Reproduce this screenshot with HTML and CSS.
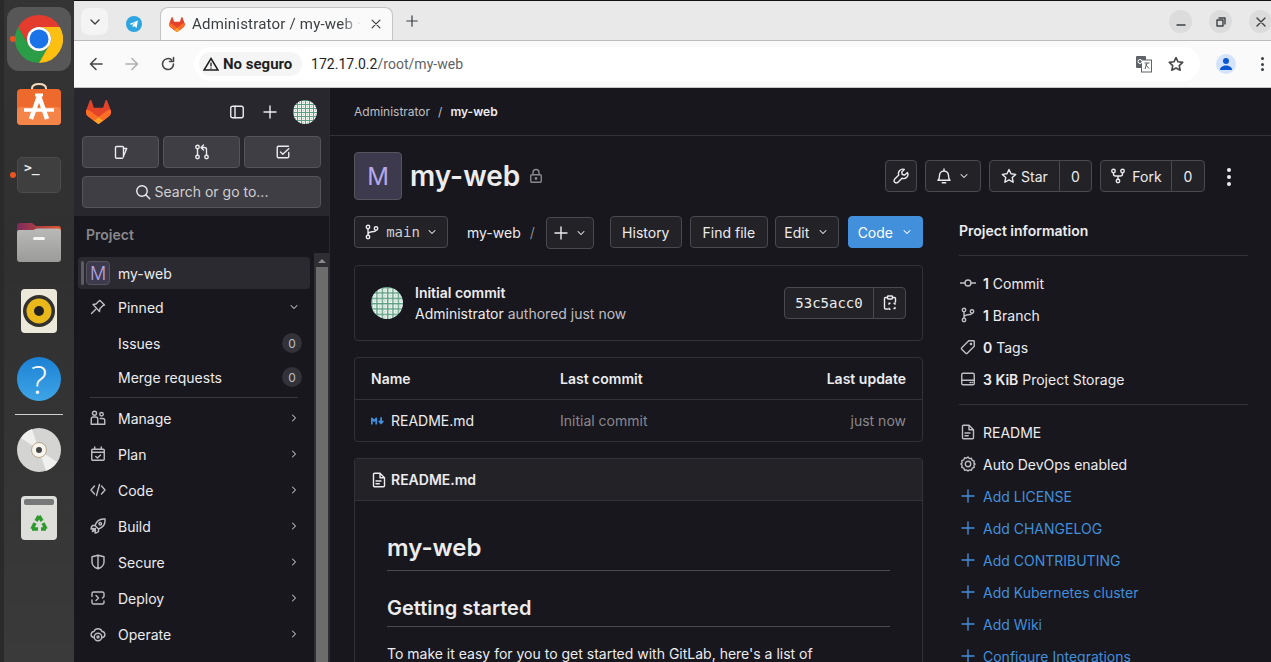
FILE: index.html
```html
<!DOCTYPE html>
<html lang="es">
<head>
  <meta charset="UTF-8">
  <meta name="viewport" content="width=device-width, initial-scale=1.0">
  <title>Administrator / my-web</title>
  <link rel="stylesheet" href="styles.css">
</head>
<body>
  <svg class="sprite" aria-hidden="true">
    <defs>
      <pattern id="identicon" width="4" height="4" patternUnits="userSpaceOnUse">
        <rect width="4" height="4" fill="#eef5f1"/>
        <rect width="4" height="1" fill="#5e9f83"/>
        <rect width="1" height="4" fill="#5e9f83"/>
        <rect x="2" y="2" width="1" height="1" fill="#a9d0bd"/>
      </pattern>
      <symbol id="tanuki" viewBox="0 0 25 24">
        <path d="m24.507 9.5-.034-.09L21.082.562a.896.896 0 0 0-1.694.091l-2.29 7.01H7.825L5.535.653a.898.898 0 0 0-1.694-.09L.451 9.411.416 9.5a6.297 6.297 0 0 0 2.09 7.278l.012.01.03.022 5.16 3.867 2.56 1.935 1.554 1.176a1.051 1.051 0 0 0 1.268 0l1.555-1.176 2.56-1.935 5.197-3.89.014-.01A6.297 6.297 0 0 0 24.507 9.5Z" fill="#E24329"/>
        <path d="m24.507 9.5-.034-.09a11.44 11.44 0 0 0-4.56 2.051l-7.447 5.632 4.742 3.584 5.197-3.89.014-.01A6.297 6.297 0 0 0 24.507 9.5Z" fill="#FC6D26"/>
        <path d="m7.707 20.677 2.56 1.935 1.555 1.176a1.051 1.051 0 0 0 1.268 0l1.555-1.176 2.56-1.935-4.743-3.584-4.755 3.584Z" fill="#FCA326"/>
        <path d="M5.01 11.461a11.43 11.43 0 0 0-4.56-2.05L.416 9.5a6.297 6.297 0 0 0 2.09 7.278l.012.01.03.022 5.16 3.867 4.745-3.584-7.444-5.632Z" fill="#FC6D26"/>
      </symbol>
      <symbol id="avatar" viewBox="0 0 24 24"><circle cx="12" cy="12" r="12" fill="url(#identicon)"/></symbol>
      <symbol id="chev-d" viewBox="0 0 16 16"><path d="M4 6l4 4 4-4"/></symbol>
      <symbol id="chev-r" viewBox="0 0 16 16"><path d="M6 4l4 4-4 4"/></symbol>
      <symbol id="plus" viewBox="0 0 16 16"><path d="M8 2v12M2 8h12"/></symbol>
      <symbol id="tab-x" viewBox="0 0 16 16"><path d="M3.500 3.500l9 9M12.500 3.500l-9 9"/></symbol>
      <symbol id="panel" viewBox="0 0 16 16"><rect x="1.750" y="2.250" width="12.500" height="11.500" rx="2"/><path d="M6 2.250v11.500"/></symbol>
      <symbol id="issue-new" viewBox="0 0 16 16"><path d="M10.500 13V3.500a1 1 0 0 0-1-1H3.500a1 1 0 0 0-1 1v9.750a1 1 0 0 0 1 1h6"/><path d="M10.500 4.500h3.250L11 11"/></symbol>
      <symbol id="mr" viewBox="0 0 16 16"><circle cx="3.500" cy="3" r="1.750"/><circle cx="3.500" cy="13" r="1.750"/><circle cx="12.500" cy="13" r="1.750"/><path d="M3.500 4.750v6.500M12.500 11.250V5.500a2 2 0 0 0-2-2H7.500M9.500 1L7 3.500 9.500 6"/></symbol>
      <symbol id="todo" viewBox="0 0 16 16"><path d="M13.750 8.500v4a1.250 1.250 0 0 1-1.250 1.250h-9A1.250 1.250 0 0 1 2.250 12.500v-9A1.250 1.250 0 0 1 3.500 2.250h10"/><path d="M5.500 8l2.250 2.250 6-5.500"/></symbol>
      <symbol id="search" viewBox="0 0 16 16"><circle cx="7" cy="7" r="5.250"/><path d="M11 11l3.750 3.750"/></symbol>
      <symbol id="pin" viewBox="0 0 16 16"><path d="M10 1.500l4.500 4.500-1.500.5-3 3-.5 3L3 5.500l3-.5 3-3zM5.500 10.500L1.500 14.500"/></symbol>
      <symbol id="users" viewBox="0 0 16 16"><circle cx="4.500" cy="3.250" r="2"/><circle cx="11.500" cy="4.250" r="1.750"/><path d="M1.250 14.250V9a2 2 0 0 1 2-2h2.500a2 2 0 0 1 2 2v5.250zM7.750 14.250h7V10.500a2 2 0 0 0-2-2h-2.500"/></symbol>
      <symbol id="calendar" viewBox="0 0 16 16"><rect x="1.750" y="3.250" width="12.500" height="11" rx="1"/><path d="M1.750 6.250h12.500M4.750 1v2.250M11.250 1v2.250M5.750 10.500l1.750 1.500 3-3"/></symbol>
      <symbol id="code" viewBox="0 0 16 16"><path d="M4.500 4L1 8l3.500 4M11.500 4L15 8l-3.500 4M9.500 2.500l-3 11"/></symbol>
      <symbol id="rocket" viewBox="0 0 16 16"><path d="M15 1c-5-.5-8.500 2-10 6.500l3.500 3.500C13 9.500 15.500 6 15 1zM5 7.500H2.500A6 6 0 0 0 1 11l2.500-.5M8.500 11v2.500A6 6 0 0 1 5 15l.5-2.500M5.500 10.500c-1.500 0-2.500 1-3 3 2-.5 3-1.500 3-3z"/><circle cx="10.250" cy="5.750" r="1.250"/></symbol>
      <symbol id="shield" viewBox="0 0 16 16"><path d="M8 1.250l6 1.500V8c0 3.500-3 5.750-6 6.750C5 13.750 2 11.500 2 8V2.750zM8 1.250v13.500"/></symbol>
      <symbol id="deploy" viewBox="0 0 16 16"><path d="M2 6.500V3.500a1.500 1.500 0 0 1 1.500-1.500H12.500a1.500 1.500 0 0 1 1.500 1.500v3l-1.500 1.500M2 10v2.500A1.500 1.500 0 0 0 3.500 14h9a1.500 1.500 0 0 0 1.500-1.500V11M6 5.500L8.500 8 6 10.500"/></symbol>
      <symbol id="operate" viewBox="0 0 16 16"><path d="M3.500 11.500A3 3 0 0 1 1.250 8 3 3 0 0 1 4 5.500 4.250 4.250 0 0 1 12 5.500 3 3 0 0 1 14.750 8a3 3 0 0 1-2.250 3.500"/><circle cx="8" cy="11" r="3.750"/><circle cx="8" cy="11" r="1"/></symbol>
      <symbol id="lock" viewBox="0 0 16 16"><rect x="2.750" y="6.750" width="10.500" height="7.500" rx="1"/><path d="M5 6.750V4.500a3 3 0 0 1 6 0v2.250"/><circle cx="8" cy="10.500" r=".75"/></symbol>
      <symbol id="wrench" viewBox="0 0 16 16"><path d="M14.500 4.500l-2.750 2.500-2.500-.5-.5-2.500L11.250 1.500A4.250 4.250 0 0 0 5.750 7L1.750 11a2.250 2.250 0 0 0 3.250 3.250l4-4A4.250 4.250 0 0 0 14.500 4.500z"/></symbol>
      <symbol id="bell" viewBox="0 0 16 16"><path d="M2 12.250h12c-1.250-1-1.500-2.500-1.500-4.750a4.500 4.500 0 0 0-9 0c0 2.250-.25 3.750-1.500 4.750zM6.250 14.750h3.500M8 1v2"/></symbol>
      <symbol id="star" viewBox="0 0 16 16"><path d="M8 1.500l2 4.300 4.700.6-3.450 3.200.9 4.650L8 11.950 3.850 14.250l.9-4.650L1.300 6.400 6 5.800z"/></symbol>
      <symbol id="fork" viewBox="0 0 16 16"><circle cx="3.500" cy="3" r="1.750"/><circle cx="12.500" cy="3" r="1.750"/><circle cx="8" cy="13" r="1.750"/><path d="M3.500 4.750V6a2 2 0 0 0 2 2h5a2 2 0 0 0 2-2V4.750M8 8v3.250"/></symbol>
      <symbol id="branch" viewBox="0 0 16 16"><circle cx="4" cy="3" r="1.750"/><circle cx="4" cy="13" r="1.750"/><circle cx="12" cy="4.500" r="1.750"/><path d="M4 4.750v6.500M4 10.500c0-2 1.500-2.500 4-2.750 2.500-.25 4-.75 4-1.500"/></symbol>
      <symbol id="clip" viewBox="0 0 16 16"><path d="M5.500 2.500H3.500a1 1 0 0 0-1 1v9.500a1 1 0 0 0 1 1h2M10.500 2.500h2a1 1 0 0 1 1 1V7"/><rect x="5.500" y="1" width="5" height="3" rx=".75"/><path d="M8 8.250H7v1M12 8.250h1v1M13 12.500v1h-1M8 14.250H7v-1"/></symbol>
      <symbol id="doc" viewBox="0 0 16 16"><path d="M9 1.250H3.500a1 1 0 0 0-1 1v11.500a1 1 0 0 0 1 1h9a1 1 0 0 0 1-1V5.750zM9 1.250v4.500h4.500M5 9h5M5 11.750h3.250"/></symbol>
      <symbol id="commit" viewBox="0 0 16 16"><circle cx="8" cy="8" r="3"/><path d="M0 8h5M11 8h5"/></symbol>
      <symbol id="tag" viewBox="0 0 16 16"><path d="M14.250 2.500a.75.750 0 0 0-.75-.75H8.750L1.750 8.750a1 1 0 0 0 0 1.500l4 4a1 1 0 0 0 1.500 0l7-7z"/><circle cx="11" cy="5" r=".6"/></symbol>
      <symbol id="disk" viewBox="0 0 16 16"><rect x="1.750" y="2.250" width="12.500" height="11.500" rx="1.250"/><path d="M1.750 9.250h12.500M10 11.500h.5M12 11.500h.5"/></symbol>
      <symbol id="gear" viewBox="0 0 16 16"><path d="M8 .9l1.300 1.700 2.100-.3.800 2 2 .8-.3 2.100L15.100 8l-1.200 1.300.3 2.100-2 .8-.8 2-2.100-.3L8 15.100l-1.300-1.200-2.100.3-.8-2-2-.8.3-2.100L.9 8l1.200-1.300-.3-2.100 2-.8.8-2 2.100.3z"/><circle cx="8" cy="8" r="2.750"/></symbol>
      <symbol id="markdown" viewBox="0 0 16 10"><path d="M1 8V2l2.500 3L6 2v6M11.500 1.500v6M9.500 5.500l2 2.250 2-2.250"/></symbol>
      <linearGradient id="folder-back" x1="0" x2="1" y1="0" y2="0"><stop offset="0" stop-color="#7d2a5c"/><stop offset="1" stop-color="#e0572a"/></linearGradient>
      <linearGradient id="folder-front" x1="0" x2="0" y1="0" y2="1"><stop offset="0" stop-color="#b9b9b7"/><stop offset="1" stop-color="#9b9b99"/></linearGradient>
    </defs>
  </svg>

  <aside class="dock">
    <div class="dock-item dock-active">
      <span class="dock-dot"></span>
      <svg width="48" height="48" viewBox="0 0 48 48">
        <path d="M24 0A24 24 0 0 1 44.800 12H24A12 12 0 0 0 13.600 30L3.200 12A24 24 0 0 1 24 0z" fill="#e33b2e"/>
        <path d="M3.200 12L13.600 30A12 12 0 0 0 34.400 30L24 48A24 24 0 0 1 3.200 12z" fill="#2a9d46"/>
        <path d="M44.800 12H24A12 12 0 0 1 34.400 30L24 48A24 24 0 0 0 44.800 12z" fill="#fdc010"/>
        <circle cx="24" cy="24" r="12" fill="#fff"/>
        <circle cx="24" cy="24" r="9.500" fill="#1a73e8"/>
      </svg>
    </div>
    <div class="dock-item dock-store">
      <svg width="44" height="44" viewBox="0 0 44 44">
        <path d="M15 7V5.500C15 2.500 18 1 22 1s7 1.500 7 4.500V7" fill="none" stroke="#f7dcbc" stroke-width="2"/>
        <rect y="6" width="44" height="36" rx="4" fill="#ee6a2c"/>
        <rect y="24" width="44" height="18" rx="4" fill="#f58449"/>
        <path d="M22 13L14 36M22 13l8 23" stroke="#fff" stroke-width="4.500" fill="none"/>
        <path d="M18 12h8" stroke="#fff" stroke-width="3"/>
        <path d="M7 27h30" stroke="#fff" stroke-width="3.500"/>
      </svg>
    </div>
    <div class="dock-item dock-term">
      <span class="dock-dot"></span>
      <span class="term-box">&gt;_</span>
    </div>
    <div class="dock-item dock-files">
      <svg width="44" height="42" viewBox="0 0 44 42">
        <path d="M0 4a3 3 0 0 1 3-3h12l4 3h22a3 3 0 0 1 3 3v14H0z" fill="url(#folder-back)"/>
        <path d="M0 10a2 2 0 0 1 2-2h14l4-1.500h21a3 3 0 0 1 3 3V37a3 3 0 0 1-3 3H3a3 3 0 0 1-3-3z" fill="url(#folder-front)"/>
        <rect x="16" y="15" width="12" height="3" rx="1.500" fill="#f5f5f5"/>
      </svg>
    </div>
    <div class="dock-item dock-rhythm">
      <svg width="36" height="44" viewBox="0 0 36 44">
        <rect width="36" height="44" rx="4" fill="#ece8da"/>
        <circle cx="18" cy="22" r="16" fill="#33312e"/>
        <circle cx="18" cy="22" r="12.500" fill="#e9b91c"/>
        <circle cx="18" cy="22" r="5" fill="#222"/>
      </svg>
    </div>
    <div class="dock-item dock-help">?</div>
    <div class="dock-sep"></div>
    <div class="dock-item dock-dvd">
      <svg width="44" height="44" viewBox="0 0 44 44">
        <circle cx="22" cy="22" r="22" fill="#d4d4d2"/>
        <path d="M22 22L4 10A22 22 0 0 1 15 1zM22 22L40 34A22 22 0 0 1 29 43z" fill="#f0f0ee"/>
        <circle cx="22" cy="22" r="7.500" fill="#f7f5ee" stroke="#b9a98a"/>
        <circle cx="22" cy="22" r="3" fill="#444"/>
      </svg>
    </div>
    <div class="dock-item dock-trash">
      <svg width="36" height="44" viewBox="0 0 36 44">
        <rect width="36" height="44" rx="4" fill="#dededb"/>
        <rect x="3" y="3" width="30" height="6" rx="2" fill="#77787a"/>
        <path d="M18 20l-3 5M18 20l3 5M11 33l3-6M11 33h6M25 33l-3-6M25 33h-5" stroke="#2e9a2e" stroke-width="3.500" fill="none"/>
      </svg>
    </div>
  </aside>

  <div class="window">
    <header class="chrome">
      <div class="tabstrip">
        <span class="tab-search"><svg class="ic ic-dark" width="16" height="16"><use href="#chev-d"/></svg></span>
        <span class="tab-pin">
          <svg width="16" height="16" viewBox="0 0 16 16"><circle cx="8" cy="8" r="8" fill="#2ca5e0"/><path d="M3.500 8L12 4.500 10.500 12 8 10l-1.200 1.500L6.500 9l3.500-3L5.500 8.800z" fill="#fff"/></svg>
        </span>
        <div class="tab-active">
          <svg width="16" height="15"><use href="#tanuki"/></svg>
          <span class="tab-title">Administrator / my-web · GitLab</span>
          <svg class="ic ic-dark" width="14" height="14"><use href="#tab-x"/></svg>
        </div>
        <svg class="ic ic-dark tab-new" width="14" height="14"><use href="#plus"/></svg>
        <div class="win-controls">
          <span class="win-btn"><svg class="ic ic-dark" width="12" height="12" viewBox="0 0 12 12"><path d="M2 9h8"/></svg></span>
          <span class="win-btn"><svg class="ic ic-dark" width="12" height="12" viewBox="0 0 12 12"><rect x="2" y="4" width="6" height="6"/><path d="M4 2h6v6"/></svg></span>
          <span class="win-btn"><svg class="ic ic-dark" width="12" height="12" viewBox="0 0 12 12"><path d="M2 2l8 8M10 2l-8 8"/></svg></span>
        </div>
      </div>
      <div class="toolbar">
        <svg class="ic ic-nav" width="16" height="16" viewBox="0 0 16 16"><path d="M14 8H2.500M8 2.500L2.500 8 8 13.500"/></svg>
        <svg class="ic ic-nav ic-off" width="16" height="16" viewBox="0 0 16 16"><path d="M2 8h11.500M8 2.500L13.500 8 8 13.500"/></svg>
        <svg class="ic ic-nav" width="16" height="16" viewBox="0 0 16 16"><path d="M13.500 8A5.500 5.500 0 1 1 11.500 3.800M13.500 1.500v4h-4"/></svg>
        <div class="omnibox">
          <span class="chip">
            <svg width="16" height="14" viewBox="0 0 16 14"><path d="M8 1.500L15 13H1z" fill="none" stroke="#1f1f1f" stroke-width="1.500"/><path d="M8 5.500v4M8 10.500v1.300" stroke="#1f1f1f" stroke-width="1.300"/></svg>
            No seguro
          </span>
          <span class="url"><b>172.17.0.2</b>/root/my-web</span>
          <svg class="omni-translate" width="18" height="18" viewBox="0 0 18 18">
            <rect x="1" y="1" width="10" height="12" rx="1" fill="#5f6368"/>
            <rect x="6.500" y="5" width="10" height="12" fill="#fff" stroke="#5f6368"/>
            <path d="M9.500 8h5M12 8l-2 6M10.500 9.500l3.500 4" stroke="#5f6368" fill="none"/>
            <circle cx="5" cy="6.500" r="2" fill="none" stroke="#fff"/>
          </svg>
          <svg class="ic ic-nav" width="16" height="16"><use href="#star"/></svg>
        </div>
        <span class="profile">
          <svg width="14" height="14" viewBox="0 0 14 14"><circle cx="7" cy="4" r="3" fill="#0b57d0"/><path d="M1 13c0-3 3-4.500 6-4.500s6 1.500 6 4.500z" fill="#0b57d0"/></svg>
        </span>
        <span class="kebab kebab-dark"><i></i><i></i><i></i></span>
      </div>
    </header>

    <div class="gitlab">
      <nav class="sidebar">
        <div class="side-top">
          <div class="side-brand">
            <svg class="logo" width="25" height="24"><use href="#tanuki"/></svg>
            <svg class="ic ic-light brand-panel" width="16" height="16"><use href="#panel"/></svg>
            <svg class="ic ic-light brand-plus" width="16" height="16"><use href="#plus"/></svg>
            <svg class="brand-avatar" width="24" height="24"><use href="#avatar"/></svg>
          </div>
          <div class="side-btns">
            <span class="side-btn"><svg class="ic ic-light" width="16" height="16"><use href="#issue-new"/></svg></span>
            <span class="side-btn"><svg class="ic ic-light" width="16" height="16"><use href="#mr"/></svg></span>
            <span class="side-btn"><svg class="ic ic-light" width="16" height="16"><use href="#todo"/></svg></span>
          </div>
          <div class="side-search"><svg class="ic ic-light" width="16" height="16"><use href="#search"/></svg>Search or go to...</div>
        </div>
        <div class="side-bottom">
          <div class="side-label">Project</div>
          <div class="side-scroll">
            <div class="side-menu">
              <a class="nav-item nav-current"><span class="nav-avatar">M</span>my-web</a>
              <a class="nav-item"><svg class="ic ic-mid" width="16" height="16"><use href="#pin"/></svg>Pinned<svg class="ic ic-mid nav-chev" width="12" height="12"><use href="#chev-d"/></svg></a>
              <a class="nav-item nav-sub">Issues<span class="nav-badge">0</span></a>
              <a class="nav-item nav-sub nav-sub2">Merge requests<span class="nav-badge">0</span></a>
              <div class="nav-sep"></div>
              <a class="nav-item"><svg class="ic ic-mid" width="16" height="16"><use href="#users"/></svg>Manage<svg class="ic ic-mid nav-chev" width="12" height="12"><use href="#chev-r"/></svg></a>
              <a class="nav-item"><svg class="ic ic-mid" width="16" height="16"><use href="#calendar"/></svg>Plan<svg class="ic ic-mid nav-chev" width="12" height="12"><use href="#chev-r"/></svg></a>
              <a class="nav-item"><svg class="ic ic-mid" width="16" height="16"><use href="#code"/></svg>Code<svg class="ic ic-mid nav-chev" width="12" height="12"><use href="#chev-r"/></svg></a>
              <a class="nav-item"><svg class="ic ic-mid" width="16" height="16"><use href="#rocket"/></svg>Build<svg class="ic ic-mid nav-chev" width="12" height="12"><use href="#chev-r"/></svg></a>
              <a class="nav-item"><svg class="ic ic-mid" width="16" height="16"><use href="#shield"/></svg>Secure<svg class="ic ic-mid nav-chev" width="12" height="12"><use href="#chev-r"/></svg></a>
              <a class="nav-item"><svg class="ic ic-mid" width="16" height="16"><use href="#deploy"/></svg>Deploy<svg class="ic ic-mid nav-chev" width="12" height="12"><use href="#chev-r"/></svg></a>
              <a class="nav-item"><svg class="ic ic-mid" width="16" height="16"><use href="#operate"/></svg>Operate<svg class="ic ic-mid nav-chev" width="12" height="12"><use href="#chev-r"/></svg></a>
            </div>
            <div class="scrollbar"><span class="scroll-up"></span><span class="scroll-thumb"></span></div>
          </div>
        </div>
      </nav>

      <main class="main">
        <div class="crumbs"><span>Administrator</span><span class="crumb-sep">/</span><strong>my-web</strong></div>
        <div class="content">
          <div class="center">
            <div class="proj-head">
              <span class="proj-avatar">M</span>
              <h1 class="proj-title">my-web</h1>
              <svg class="ic proj-lock" width="16" height="16"><use href="#lock"/></svg>
              <div class="proj-actions">
                <span class="btn btn-sq"><svg class="ic ic-light" width="16" height="16"><use href="#wrench"/></svg></span>
                <span class="btn btn-bell"><svg class="ic ic-light" width="16" height="16"><use href="#bell"/></svg><svg class="ic ic-light" width="12" height="12"><use href="#chev-d"/></svg></span>
                <span class="btn-group">
                  <span class="btn btn-star"><svg class="ic ic-light" width="16" height="16"><use href="#star"/></svg>Star</span><span class="btn btn-count">0</span>
                </span>
                <span class="btn-group">
                  <span class="btn btn-fork"><svg class="ic ic-light" width="16" height="16"><use href="#fork"/></svg>Fork</span><span class="btn btn-count btn-count-f">0</span>
                </span>
              </div>
            </div>

            <div class="repo-bar">
              <span class="btn btn-branch"><svg class="ic ic-light" width="16" height="16"><use href="#branch"/></svg><code>main</code><svg class="ic ic-light" width="12" height="12"><use href="#chev-d"/></svg></span>
              <span class="repo-path">my-web</span>
              <span class="repo-slash">/</span>
              <span class="btn btn-add"><svg class="ic ic-light" width="16" height="16"><use href="#plus"/></svg><svg class="ic ic-light" width="12" height="12"><use href="#chev-d"/></svg></span>
              <span class="btn btn-history">History</span>
              <span class="btn btn-find">Find file</span>
              <span class="btn btn-edit">Edit<svg class="ic ic-light" width="12" height="12"><use href="#chev-d"/></svg></span>
              <span class="btn btn-code">Code<svg class="ic ic-white" width="12" height="12"><use href="#chev-d"/></svg></span>
            </div>

            <div class="commit-box">
              <svg width="32" height="32"><use href="#avatar"/></svg>
              <div class="commit-text">
                <strong>Initial commit</strong>
                <div><span class="commit-author">Administrator</span> authored just now</div>
              </div>
              <div class="sha">
                <code>53c5acc0</code>
                <span class="sha-copy"><svg class="ic ic-light" width="16" height="16"><use href="#clip"/></svg></span>
              </div>
            </div>

            <table class="files">
              <thead>
                <tr><th>Name</th><th>Last commit</th><th class="right">Last update</th></tr>
              </thead>
              <tbody>
                <tr>
                  <td class="file-name"><svg class="ic ic-blue" width="14" height="10"><use href="#markdown"/></svg>README.md</td>
                  <td class="muted">Initial commit</td>
                  <td class="muted right">just now</td>
                </tr>
              </tbody>
            </table>

            <section class="readme">
              <div class="readme-head"><svg class="ic ic-light" width="16" height="16"><use href="#doc"/></svg>README.md</div>
              <div class="readme-body">
                <h2>my-web</h2>
                <h3>Getting started</h3>
                <p>To make it easy for you to get started with GitLab, here's a list of recommended next steps.</p>
              </div>
            </section>
          </div>

          <aside class="info">
            <h4>Project information</h4>
            <ul class="info-list info-stats">
              <li><svg class="ic ic-mid" width="16" height="16"><use href="#commit"/></svg><span><b>1</b> Commit</span></li>
              <li><svg class="ic ic-mid" width="16" height="16"><use href="#branch"/></svg><span><b>1</b> Branch</span></li>
              <li><svg class="ic ic-mid" width="16" height="16"><use href="#tag"/></svg><span><b>0</b> Tags</span></li>
              <li><svg class="ic ic-mid" width="16" height="16"><use href="#disk"/></svg><span><b>3 KiB</b> Project Storage</span></li>
            </ul>
            <ul class="info-list">
              <li><svg class="ic ic-mid" width="16" height="16"><use href="#doc"/></svg><span>README</span></li>
              <li><svg class="ic ic-mid" width="16" height="16"><use href="#gear"/></svg><span>Auto DevOps enabled</span></li>
              <li class="info-link"><svg class="ic ic-link" width="16" height="16"><use href="#plus"/></svg><span>Add LICENSE</span></li>
              <li class="info-link"><svg class="ic ic-link" width="16" height="16"><use href="#plus"/></svg><span>Add CHANGELOG</span></li>
              <li class="info-link"><svg class="ic ic-link" width="16" height="16"><use href="#plus"/></svg><span>Add CONTRIBUTING</span></li>
              <li class="info-link"><svg class="ic ic-link" width="16" height="16"><use href="#plus"/></svg><span>Add Kubernetes cluster</span></li>
              <li class="info-link"><svg class="ic ic-link" width="16" height="16"><use href="#plus"/></svg><span>Add Wiki</span></li>
              <li class="info-link"><svg class="ic ic-link" width="16" height="16"><use href="#plus"/></svg><span>Configure Integrations</span></li>
            </ul>
          </aside>

          <div class="kebab kebab-light"><i></i><i></i><i></i></div>
        </div>
      </main>
    </div>
  </div>
</body>
</html>
```

FILE: styles.css
```css
html, body {
  height: 662px;
  overflow: hidden;
}
body {
  margin: 0;
  display: flex;
  font-family: Inter, "Noto Sans", sans-serif;
  font-size: 14px;
  color: #ececef;
  background-color: #18171d;
}
.sprite {
  position: absolute;
  width: 0;
  height: 0;
}

/* generic stroke icons */
.ic {
  flex: none;
  fill: none;
  stroke: currentColor;
  stroke-width: 1.4;
  stroke-linecap: round;
  stroke-linejoin: round;
}
.ic-dark { color: #3c4043; }
.ic-light { color: #ececef; }
.ic-mid { color: #bfbfc3; }
.ic-white { color: #fff; }
.ic-blue { color: #428fdc; stroke-width: 2; }
.ic-link { color: #428fdc; }
.ic-nav { color: #474747; stroke-width: 1.6; }
.ic-off { color: #b0b0b0; }

/* ubuntu dock */
.dock {
  width: 74px;
  flex: none;
  height: 662px;
  box-sizing: border-box;
  padding-top: 7px;
  background: linear-gradient(180deg, #343434 0%, #303030 40%, #3a3a3a 100%);
  border-left: 4px solid #2a2a2a;
  margin: 0;
  position: relative;
}
.dock-item {
  position: absolute;
  left: 3px;
  width: 64px;
  display: flex;
  align-items: center;
  justify-content: center;
}
.dock-dot {
  position: absolute;
  left: 3px;
  top: 50%;
  width: 6px;
  height: 6px;
  margin-top: -3px;
  border-radius: 50%;
  background-color: #e95420;
}
.dock-active {
  top: 7px;
  height: 64px;
  background-color: #575757;
  border-radius: 12px;
}
.dock-store { top: 83px; height: 44px; }
.dock-term { top: 153px; height: 44px; }
.term-box {
  width: 44px;
  height: 36px;
  box-sizing: border-box;
  padding: 2px 0 0 6px;
  background-color: #3f3f3f;
  border: 1px solid #4c4c4c;
  border-radius: 5px;
  font-family: "DejaVu Sans Mono", monospace;
  font-size: 13px;
  font-weight: 700;
  color: #eee;
}
.dock-files { top: 222px; height: 42px; }
.dock-rhythm { top: 289px; height: 44px; }
.dock-help {
  top: 357px;
  left: 13px;
  width: 44px;
  height: 44px;
  border-radius: 50%;
  background: linear-gradient(180deg, #1c81d4 0%, #3fa5e6 100%);
  color: #fff;
  font-family: "Open Sans", sans-serif;
  font-size: 38px;
  font-weight: 300;
}
.dock-sep {
  position: absolute;
  top: 414px;
  left: 11px;
  width: 48px;
  height: 1px;
  background-color: #cfcfcf;
}
.dock-dvd { top: 428px; height: 44px; }
.dock-trash { top: 496px; height: 44px; }

/* browser */
.window {
  flex: 1;
  min-width: 0;
  display: flex;
  flex-direction: column;
}
.chrome {
  height: 88px;
  flex: none;
  color: #1f1f1f;
  font-family: Roboto, sans-serif;
}
.tabstrip {
  height: 40px;
  box-sizing: border-box;
  border-top: 1px solid #111;
  background-color: #e9e9e9;
  display: flex;
  align-items: flex-end;
  padding-left: 7px;
  position: relative;
}
.tab-search {
  width: 27px;
  height: 27px;
  margin-bottom: 5px;
  background-color: #f4f4f4;
  border-radius: 8px;
  display: flex;
  align-items: center;
  justify-content: center;
}
.tab-pin {
  width: 52px;
  height: 33px;
  display: flex;
  align-items: center;
  justify-content: center;
}
.tab-active {
  width: 233px;
  height: 33px;
  box-sizing: border-box;
  padding: 0 9px 0 8px;
  background-color: #fafafa;
  border: 1px solid #c4c4c4;
  border-bottom: none;
  border-radius: 8px 8px 0 0;
  display: flex;
  align-items: center;
  gap: 7px;
  font-size: 15px;
  letter-spacing: .2px;
  color: #3c4043;
}
.tab-title {
  flex: 1;
  min-width: 0;
  white-space: nowrap;
  overflow: hidden;
  -webkit-mask-image: linear-gradient(90deg, #000 88%, transparent 100%);
  mask-image: linear-gradient(90deg, #000 88%, transparent 100%);
}
.tab-new {
  margin: 0 0 12px 12px;
}
.win-controls {
  margin-left: auto;
  display: flex;
  gap: 17px;
  margin-bottom: 7px;
  margin-right: -1px;
}
.win-btn {
  width: 23px;
  height: 23px;
  border-radius: 50%;
  background-color: #dcdcdc;
  display: flex;
  align-items: center;
  justify-content: center;
}
.toolbar {
  height: 48px;
  box-sizing: border-box;
  background-color: #fafafa;
  border-top: 1px solid #bcbcbc;
  border-bottom: 1px solid #c6c6c6;
  display: flex;
  align-items: center;
  padding-left: 14px;
}
.toolbar > .ic-nav {
  margin-right: 20px;
}
.omnibox {
  width: 1006px;
  height: 34px;
  margin-left: -2px;
  box-sizing: border-box;
  background-color: #fff;
  border-radius: 17px;
  display: flex;
  align-items: center;
  padding: 0 16px 0 5px;
}
.chip {
  display: flex;
  align-items: center;
  gap: 4px;
  height: 24px;
  width: 103px;
  box-sizing: border-box;
  padding-left: 4px;
  background-color: #f5f5f5;
  border-radius: 12px;
  font-weight: 700;
  font-size: 15px;
  color: #1f1f1f;
}
.url {
  margin-left: 9px;
  font-size: 14px;
  letter-spacing: .03px;
  color: #5f6368;
  flex: 1;
}
.url b {
  font-weight: 400;
  color: #1f1f1f;
}
.omni-translate {
  margin-right: 15px;
}
.profile {
  width: 20px;
  height: 20px;
  margin-left: 16px;
  border-radius: 50%;
  background-color: #d3e3fd;
  display: flex;
  align-items: center;
  justify-content: center;
}
.kebab {
  display: flex;
  flex-direction: column;
  gap: 2.5px;
  align-items: center;
}
.kebab i {
  width: 3px;
  height: 3px;
  border-radius: 50%;
  background-color: #3c4043;
}
.kebab-dark {
  margin-left: 25px;
}

/* gitlab shell */
.gitlab {
  flex: 1;
  display: flex;
  min-height: 0;
}
.sidebar {
  width: 256px;
  flex: none;
  display: flex;
  flex-direction: column;
  border-right: 1px solid #2b2a30;
  box-sizing: border-box;
  background-color: #18171d;
}
.side-top {
  height: 128px;
  flex: none;
  box-sizing: border-box;
  padding: 12px 8px 0;
  background-color: #28272d;
}
.side-brand {
  height: 24px;
  display: flex;
  align-items: center;
}
.logo {
  margin-left: 4px;
}
.brand-panel { margin-left: 118px; }
.brand-plus { margin-left: 17px; }
.brand-avatar { margin-left: 15px; }
.side-btns {
  display: flex;
  gap: 4px;
  margin-top: 12px;
}
.side-btn {
  width: 77px;
  height: 32px;
  box-sizing: border-box;
  background-color: #3f3e44;
  border: 1px solid #55545a;
  border-radius: 4px;
  display: flex;
  align-items: center;
  justify-content: center;
}
.side-search {
  margin-top: 8px;
  width: 239px;
  height: 32px;
  box-sizing: border-box;
  padding-bottom: 1px;
  background-color: #3f3e44;
  border: 1px solid #55545a;
  border-radius: 4px;
  display: flex;
  align-items: center;
  justify-content: center;
  gap: 4px;
  color: #d1d0d3;
}
.side-bottom {
  flex: 1;
  min-height: 0;
  display: flex;
  flex-direction: column;
}
.side-label {
  height: 37px;
  flex: none;
  box-sizing: border-box;
  padding: 10px 0 0 12px;
  font-weight: 600;
  color: #89888d;
}
.side-scroll {
  flex: 1;
  min-height: 0;
  display: flex;
  overflow: hidden;
}
.side-menu {
  width: 232px;
  flex: none;
  margin: 4px 4px 0;
}
.nav-item {
  height: 32px;
  display: flex;
  align-items: center;
  margin-bottom: 4px;
  padding: 0 8px 0 12px;
  color: #ececef;
  gap: 12px;
  border-radius: 4px;
  box-sizing: border-box;
  position: relative;
}
.nav-current {
  background-color: #2b2a30;
  padding-left: 8px;
  gap: 8px;
  margin-bottom: 2px;
}
.nav-current::before {
  content: "";
  position: absolute;
  left: 3px;
  top: 4px;
  bottom: 4px;
  width: 3px;
  border-radius: 2px;
  background-color: #5e5d63;
}
.nav-avatar {
  width: 24px;
  height: 24px;
  box-sizing: border-box;
  background-color: #3d3a4e;
  border: 1px solid #55545a;
  border-radius: 4px;
  display: flex;
  align-items: center;
  justify-content: center;
  color: #b5a8ea;
  font-size: 18px;
  font-weight: 300;
}
.nav-sub {
  padding-left: 40px;
  margin-bottom: 2px;
}
.nav-sub2 {
  margin-bottom: 4px;
}
.nav-chev {
  margin-left: auto;
  margin-right: 2px;
}
.nav-badge {
  margin-left: auto;
  width: 20px;
  height: 20px;
  border-radius: 50%;
  background-color: #333238;
  color: #bfbfc3;
  font-size: 12px;
  display: flex;
  align-items: center;
  justify-content: center;
}
.nav-sep {
  height: 1px;
  margin: 0 12px 4px 12px;
  background-color: #3a383f;
}
.scrollbar {
  width: 15px;
  flex: none;
  margin-left: auto;
  margin-top: 0;
  background-color: #2f2e33;
  display: flex;
  flex-direction: column;
  align-items: center;
}
.scroll-up {
  width: 0;
  height: 0;
  margin: 6px 0 4px;
  border-left: 4px solid transparent;
  border-right: 4px solid transparent;
  border-bottom: 4px solid #8a8a8a;
}
.scroll-thumb {
  width: 12px;
  flex: 1;
  background-color: #6c6c6c;
}

/* main */
.main {
  flex: 1;
  min-width: 0;
}
.crumbs {
  height: 48px;
  box-sizing: border-box;
  border-bottom: 1px solid #333238;
  padding-left: 24px;
  display: flex;
  align-items: center;
  gap: 8px;
  font-size: 12px;
  color: #bfbfc3;
}
.crumbs strong {
  font-weight: 600;
  color: #ececef;
}
.content {
  display: flex;
  padding: 16px 0 0 24px;
  gap: 36px;
  position: relative;
}
.center {
  width: 569px;
  flex: none;
}
.proj-head {
  height: 48px;
  display: flex;
  align-items: center;
  gap: 8px;
  margin-bottom: 16px;
  width: 851px;
}
.proj-avatar {
  width: 48px;
  height: 48px;
  box-sizing: border-box;
  background-color: #3d3a4e;
  border: 1px solid #55545a;
  border-radius: 4px;
  display: flex;
  align-items: center;
  justify-content: center;
  color: #b5a8ea;
  font-size: 24px;
}
.proj-title {
  margin: 0;
  font-size: 28px;
  font-weight: 600;
  color: #ececef;
}
.proj-lock {
  color: #89888d;
}
.proj-actions {
  margin-left: auto;
  display: flex;
  gap: 8px;
  margin-top: 0;
  margin-right: 0;
}
.btn {
  height: 32px;
  box-sizing: border-box;
  background-color: #232227;
  border: 1px solid #4a4950;
  border-radius: 4px;
  display: inline-flex;
  align-items: center;
  justify-content: center;
  gap: 6px;
  color: #ececef;
  flex: none;
}
.btn-sq { width: 32px; }
.btn-bell { width: 56px; }
.btn-group { display: flex; }
.btn-star {
  width: 71px;
  gap: 4px;
  border-radius: 4px 0 0 4px;
}
.btn-fork {
  width: 72px;
  border-radius: 4px 0 0 4px;
}
.btn-count {
  width: 33px;
  margin-left: -1px;
  border-radius: 0 4px 4px 0;
}
.btn-count-f { width: 34px; }
.repo-bar {
  display: flex;
  align-items: center;
  height: 32px;
  margin-bottom: 17px;
}
.btn-branch { width: 94px; }
.btn-branch code {
  font-family: "DejaVu Sans Mono", monospace;
  font-size: 14px;
  color: #d1d0d3;
}
.repo-path {
  margin-left: 19px;
  white-space: nowrap;
}
.repo-slash {
  margin-left: 9px;
  color: #89888d;
}
.btn-add {
  width: 48px;
  margin-left: 11px;
  margin-top: 2px;
}
.btn-history { width: 72px; margin-left: 16px; }
.btn-find { width: 78px; margin-left: 8px; }
.btn-edit { width: 64px; margin-left: 7px; gap: 8px; }
.btn-code {
  width: 75px;
  margin-left: 9px;
  gap: 8px;
  background-color: #428fdc;
  border-color: #428fdc;
  color: #fff;
}
.commit-box {
  height: 76px;
  box-sizing: border-box;
  border: 1px solid #333238;
  border-radius: 4px;
  display: flex;
  align-items: center;
  padding: 0 16px;
  gap: 12px;
}
.commit-text {
  flex: 1;
  color: #bfbfc3;
  line-height: 21px;
}
.commit-text strong {
  font-weight: 600;
  color: #ececef;
}
.commit-author {
  color: #ececef;
}
.sha {
  display: flex;
  height: 32px;
  box-sizing: border-box;
  background-color: #232227;
  border: 1px solid #4a4950;
  border-radius: 4px;
}
.sha code {
  width: 88px;
  border-right: 1px solid #4a4950;
  display: flex;
  align-items: center;
  justify-content: center;
  font-family: "DejaVu Sans Mono", monospace;
  font-size: 14px;
  color: #ececef;
}
.sha-copy {
  width: 31px;
  display: flex;
  align-items: center;
  justify-content: center;
}
.files {
  width: 100%;
  margin-top: 16px;
  border: 1px solid #333238;
  border-radius: 4px;
  border-spacing: 0;
  color: #ececef;
}
.files th, .files td {
  height: 41px;
  box-sizing: border-box;
  padding: 0 16px;
  text-align: left;
}
.files th {
  height: 42px;
  font-weight: 600;
  border-bottom: 1px solid #333238;
}
.files th:first-child, .files td:first-child {
  width: 189px;
  padding-right: 0;
}
.files .right {
  text-align: right;
}
.muted {
  color: #89888d;
}
.file-name .ic {
  margin-right: 6px;
}
.readme {
  margin-top: 16px;
  border: 1px solid #333238;
  border-bottom: none;
  border-radius: 4px 4px 0 0;
}
.readme-head {
  height: 42px;
  box-sizing: border-box;
  background-color: #232227;
  border-bottom: 1px solid #333238;
  padding-left: 16px;
  display: flex;
  align-items: center;
  gap: 4px;
  font-weight: 600;
}
.readme-body {
  padding: 32px 32px 0;
}
.readme-body h2 {
  margin: 0;
  height: 37px;
  font-size: 24px;
  line-height: 30px;
  font-weight: 600;
  border-bottom: 1px solid #4a4950;
  color: #ececef;
}
.readme-body h3 {
  margin: 24px 0 0;
  height: 31px;
  font-size: 20px;
  line-height: 26px;
  font-weight: 600;
  border-bottom: 1px solid #4a4950;
  color: #ececef;
}
.readme-body p {
  margin: 16px 0 0;
  line-height: 22px;
  color: #ececef;
}

/* right column */
.info {
  width: 289px;
  flex: none;
  padding-top: 64px;
}
.info h4 {
  margin: 0;
  height: 40px;
  box-sizing: border-box;
  padding-top: 4px;
  font-size: 14px;
  line-height: 22px;
  font-weight: 600;
  border-bottom: 1px solid #333238;
}
.info-list {
  list-style: none;
  margin: 0;
  padding: 11px 0 8px;
}
.info-stats {
  padding-bottom: 9px;
  border-bottom: 1px solid #333238;
}
.info-list li {
  height: 32px;
  display: flex;
  align-items: center;
  gap: 7px;
  padding-left: 1px;
}
.info-list b {
  font-weight: 600;
}
.info-link {
  color: #428fdc;
}
.kebab-light {
  position: absolute;
  left: 897px;
  top: 32px;
  gap: 3px;
}
.kebab-light i {
  width: 4px;
  height: 4px;
  background-color: #ececef;
}
```
